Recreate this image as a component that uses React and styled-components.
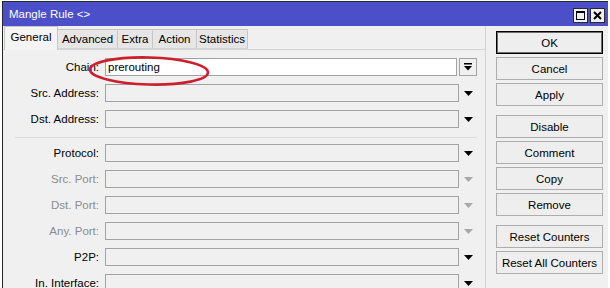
import React from 'react'
import styled, { createGlobalStyle } from 'styled-components'

const GlobalStyle = createGlobalStyle`
  html, body {
    margin: 0;
    padding: 0;
    background: #ffffff;
  }
  body {
    font-family: "Liberation Sans", Arial, sans-serif;
    font-size: 11px;
    color: #000;
  }
`

const Window = styled.div`
  margin: 1px 0 0 2px;
  width: 605px;
  height: 286px;
  border-top: 1px solid #262626;
  border-left: 1px solid #262626;
  background: #f0f0f0;
  display: flex;
  flex-direction: column;
  overflow: hidden;
`

const TitleBar = styled.div`
  height: 24px;
  flex: none;
  background: #4b50c8;
  color: #fff;
  display: flex;
  align-items: center;
  justify-content: space-between;
  padding: 0 3px 0 6px;
  font-size: 11.5px;
`

const TitleButtons = styled.div`
  display: flex;
  gap: 2px;
  margin-top: 2px;
`

const TitleButton = styled.div`
  width: 13px;
  height: 13px;
  border: 1px solid #2a2a2a;
  background: #f0f0f0;
  display: flex;
  align-items: center;
  justify-content: center;
`

const Main = styled.div`
  flex: 1;
  display: flex;
  min-height: 0;
`

const TabArea = styled.div`
  width: 482px;
  border-right: 1px solid #d4d4d4;
  display: flex;
  flex-direction: column;
`

const TabStrip = styled.div`
  height: 23px;
  flex: none;
  display: flex;
  align-items: flex-end;
  padding-left: 1px;
  position: relative;
  z-index: 1;
`

const Tab = styled.div`
  width: ${p => p.$w}px;
  height: ${p => (p.$active ? 24 : 20)}px;
  margin-bottom: ${p => (p.$active ? -1 : 0)}px;
  margin-right: -1px;
  box-sizing: border-box;
  border: 1px solid #c6c6c6;
  border-bottom: ${p => (p.$active ? 'none' : '1px solid #d4d4d4')};
  background: ${p => (p.$active ? '#f4f4f4' : '#e6e6e6')};
  display: flex;
  align-items: center;
  justify-content: center;
  padding-bottom: ${p => (p.$active ? 3 : 0)}px;
  font-size: 11.5px;
`

const Panel = styled.div`
  flex: 1;
  border-top: 1px solid #d4d4d4;
  padding-top: 8px;
  position: relative;
  display: flex;
  flex-direction: column;
  gap: 8px;
`

const Row = styled.div`
  height: 18px;
  display: flex;
  align-items: center;
  flex: none;
`

const Label = styled.div`
  width: 96px;
  margin-right: 6px;
  text-align: right;
  white-space: nowrap;
  color: ${p => (p.$muted ? '#8c8c8c' : '#000')};
  font-size: 11.5px;
`

const Field = styled.div`
  width: ${p => (p.$short ? 352 : 354)}px;
  height: 18px;
  box-sizing: border-box;
  border: 1px solid #a3a3a3;
  background: ${p => (p.$white ? '#ffffff' : '#f0f0f0')};
  margin-right: ${p => (p.$short ? 2 : 0)}px;
  padding-left: 2px;
  display: flex;
  align-items: center;
  font-size: 11.5px;
`

const ArrowCell = styled.div`
  width: 18px;
  height: 18px;
  display: flex;
  align-items: center;
  justify-content: center;
  padding-top: 1px;
  box-sizing: border-box;
  color: ${p => (p.$muted ? '#a8a8a8' : '#000')};
`

const DropButton = styled.div`
  width: 18px;
  height: 18px;
  box-sizing: border-box;
  border: 1px solid #a3a3a3;
  background: #f0f0f0;
  display: flex;
  align-items: center;
  justify-content: center;
`

const Separator = styled.div`
  margin: 1px 0 -2px 12px;
  width: 462px;
  border-top: 1px solid #dadada;
  flex: none;
`

const Annotation = styled.svg`
  position: absolute;
  left: 82px;
  top: 3px;
  pointer-events: none;
`

const ButtonColumn = styled.div`
  margin-left: 10px;
  padding-top: 5px;
  display: flex;
  flex-direction: column;
`

const Button = styled.div`
  width: 107px;
  height: 23px;
  box-sizing: border-box;
  margin-top: ${p => (p.$first ? 0 : p.$gap ? 9 : 3)}px;
  border: 1px solid ${p => (p.$default ? '#000' : '#adadad')};
  box-shadow: ${p => (p.$default ? 'inset 0 0 0 1px rgba(0,0,0,0.55)' : 'none')};
  background: #eeeeee;
  display: flex;
  align-items: center;
  justify-content: center;
  font-size: 11.5px;
`

const Arrow = () => (
  <svg width="9" height="5" viewBox="0 0 9 5">
    <polygon points="0,0 9,0 4.5,5" fill="currentColor" />
  </svg>
)

const BarArrow = () => (
  <svg width="8" height="8" viewBox="0 0 8 8">
    <rect x="0" y="0" width="8" height="1.5" fill="#000" />
    <polygon points="0,3 8,3 4,7.5" fill="#000" />
  </svg>
)

const tabs = [
  { name: 'General', w: 54, active: true },
  { name: 'Advanced', w: 61 },
  { name: 'Extra', w: 36 },
  { name: 'Action', w: 45 },
  { name: 'Statistics', w: 52 },
]

const topFields = [
  { label: 'Src. Address:' },
  { label: 'Dst. Address:' },
]

const bottomFields = [
  { label: 'Protocol:' },
  { label: 'Src. Port:', muted: true },
  { label: 'Dst. Port:', muted: true },
  { label: 'Any. Port:', muted: true },
  { label: 'P2P:' },
  { label: 'In. Interface:' },
]

const buttons = [
  { text: 'OK', def: true },
  { text: 'Cancel' },
  { text: 'Apply' },
  { text: 'Disable', gap: true },
  { text: 'Comment' },
  { text: 'Copy' },
  { text: 'Remove' },
  { text: 'Reset Counters', gap: true },
  { text: 'Reset All Counters' },
]

const FieldRow = ({ label, muted }) => (
  <Row>
    <Label $muted={muted}>{label}</Label>
    <Field />
    <ArrowCell $muted={muted}>
      <Arrow />
    </ArrowCell>
  </Row>
)

const App = () => (
  <>
    <GlobalStyle />
    <Window>
      <TitleBar>
        <span>Mangle Rule &lt;&gt;</span>
        <TitleButtons>
          <TitleButton>
            <svg width="9" height="9" viewBox="0 0 9 9">
              <rect x="0.5" y="0.5" width="8" height="8" fill="none" stroke="#000" />
              <rect x="0" y="0" width="9" height="2" fill="#000" />
            </svg>
          </TitleButton>
          <TitleButton>
            <svg width="9" height="9" viewBox="0 0 9 9">
              <path d="M1 1 L8 8 M8 1 L1 8" stroke="#000" strokeWidth="2" />
            </svg>
          </TitleButton>
        </TitleButtons>
      </TitleBar>
      <Main>
        <TabArea>
          <TabStrip>
            {tabs.map(t => (
              <Tab key={t.name} $w={t.w} $active={t.active}>
                {t.name}
              </Tab>
            ))}
          </TabStrip>
          <Panel>
            <Row>
              <Label>Chain:</Label>
              <Field $white $short>prerouting</Field>
              <DropButton>
                <BarArrow />
              </DropButton>
            </Row>
            {topFields.map(f => (
              <FieldRow key={f.label} {...f} />
            ))}
            <Separator />
            {bottomFields.map(f => (
              <FieldRow key={f.label} {...f} />
            ))}
            <Annotation width="132" height="36" viewBox="0 0 132 36">
              <ellipse
                cx="64"
                cy="18"
                rx="59"
                ry="13.5"
                fill="none"
                stroke="#cc1f2b"
                strokeWidth="2.6"
                transform="rotate(1.5 64 18)"
              />
            </Annotation>
          </Panel>
        </TabArea>
        <ButtonColumn>
          {buttons.map((b, i) => (
            <Button key={b.text} $first={i === 0} $gap={b.gap} $default={b.def}>
              {b.text}
            </Button>
          ))}
        </ButtonColumn>
      </Main>
    </Window>
  </>
)

export default App
